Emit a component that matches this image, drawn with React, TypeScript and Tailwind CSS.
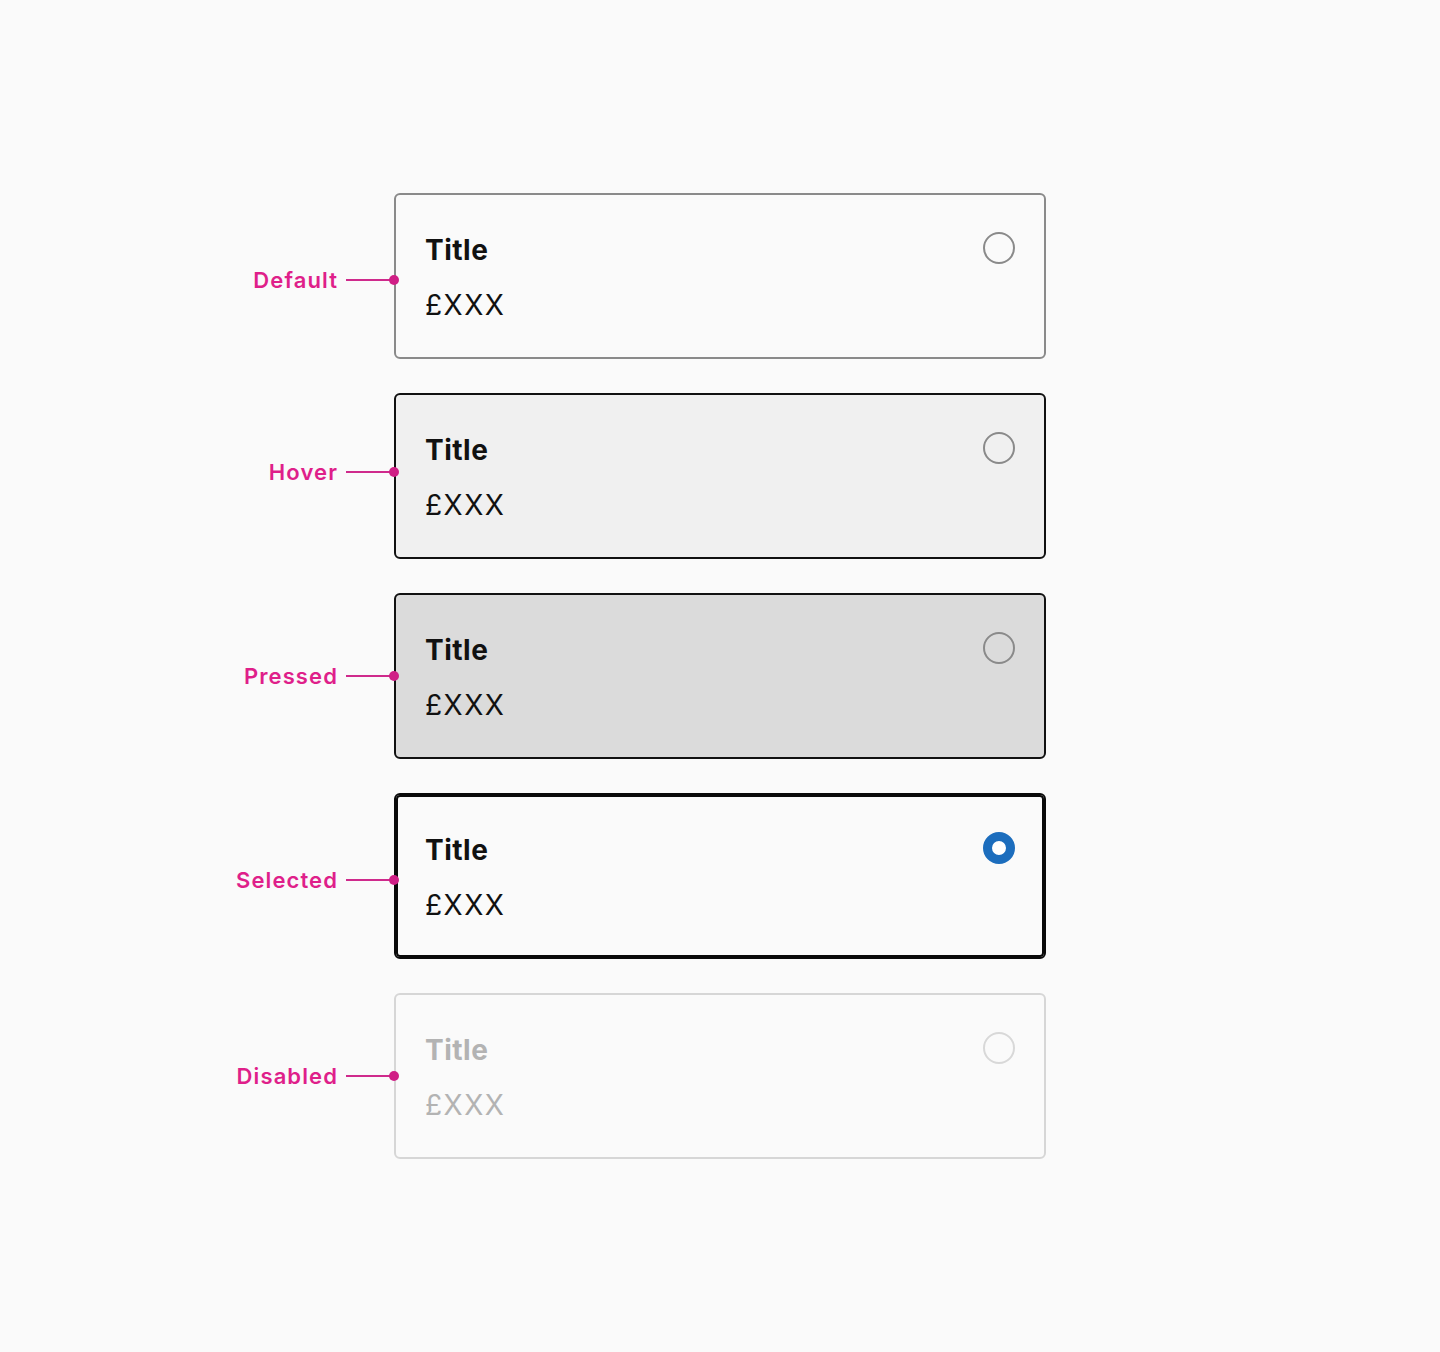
import React from 'react';

type State = 'default' | 'hover' | 'pressed' | 'selected' | 'disabled';

const rows: { state: State; label: string; labelTop: string; dotTop: string }[] = [
  { state: 'default', label: 'Default', labelTop: 'mt-[73px]', dotTop: 'top-[82px]' },
  { state: 'hover', label: 'Hover', labelTop: 'mt-[65px]', dotTop: 'top-[74px]' },
  { state: 'pressed', label: 'Pressed', labelTop: 'mt-[69px]', dotTop: 'top-[78px]' },
  { state: 'selected', label: 'Selected', labelTop: 'mt-[73px]', dotTop: 'top-[82px]' },
  { state: 'disabled', label: 'Disabled', labelTop: 'mt-[69px]', dotTop: 'top-[78px]' },
];

const cardStyles: Record<State, string> = {
  default: 'bg-[#fafafa] border-[#8a8a8a]',
  hover: 'bg-[#f0f0f0] border-[#111111]',
  pressed: 'bg-[#dbdbdb] border-[#111111]',
  selected: 'bg-[#fafafa] border-[#0a0a0a] shadow-[inset_0_0_0_2px_#0a0a0a]',
  disabled: 'bg-[#fafafa] border-[#d6d6d6]',
};

const Radio = ({ state }: { state: State }) => {
  if (state === 'selected') {
    return <div className="w-8 h-8 rounded-full border-[9px] border-[#1c6dbd] bg-white" />;
  }
  const ring = state === 'disabled' ? 'border-[#d8d8d8]' : 'border-[#8a8a8a]';
  return <div className={`w-8 h-8 rounded-full border-2 ${ring}`} />;
};

const Card = ({ state }: { state: State }) => {
  const text = state === 'disabled' ? 'text-[#b3b3b3]' : 'text-[#111111]';
  return (
    <div
      className={`w-[652px] h-[166px] border-2 rounded-[6px] flex justify-between pt-[38px] pl-[29px] pr-[29px] ${cardStyles[state]}`}
    >
      <div className="flex flex-col">
        <span className={`text-[28px] leading-[34px] font-bold tracking-[0.5px] ${text}`}>Title</span>
        <span className={`text-[28px] leading-[34px] mt-[21px] tracking-[1.5px] ${text}`}>£XXX</span>
      </div>
      <div className="-mt-px">
        <Radio state={state} />
      </div>
    </div>
  );
};

export default function App() {
  return (
    <div className="min-h-[1352px] w-full bg-[#fafafa] pt-[193px] font-['Inter','Liberation_Sans',sans-serif]">
      <div className="flex flex-col gap-[34px]">
        {rows.map((r) => (
          <div key={r.state} className="flex items-start">
            {/* annotation on the left */}
            <div className={`w-[394px] flex items-center justify-end h-7 ${r.labelTop}`}>
              <span className="text-[22px] leading-7 font-semibold tracking-[0.05em] text-[#df1f8a]">{r.label}</span>
              <div className="ml-2 w-[48px] h-[2px] bg-[#cf2a8c]" />
            </div>
            <div className="relative">
              <Card state={r.state} />
              {/* connector dot over the card edge */}
              <div className={`absolute left-[-5px] w-[10px] h-[10px] rounded-full bg-[#d01f86] ${r.dotTop}`} />
            </div>
          </div>
        ))}
      </div>
    </div>
  );
}
